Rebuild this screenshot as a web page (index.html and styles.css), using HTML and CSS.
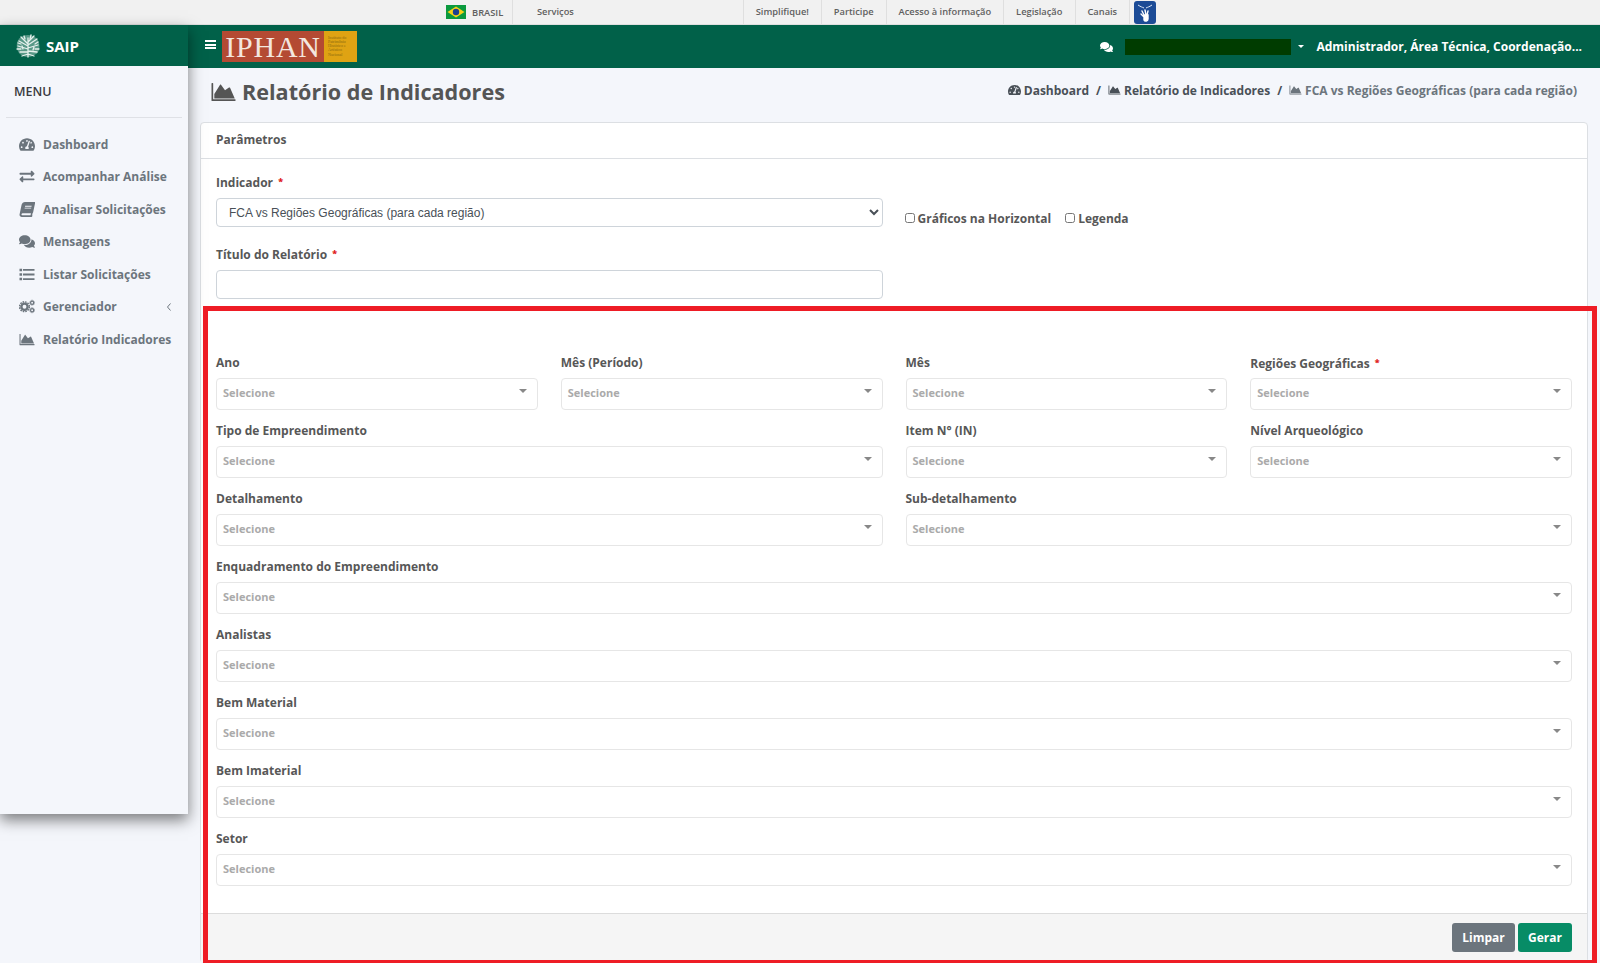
FILE: index.html
```html
<!DOCTYPE html>
<html lang="pt-BR">
<head>
    <meta charset="UTF-8">
    <title>SAIP - Relatório de Indicadores</title>
    <link rel="stylesheet" href="styles.css">
</head>
<body>
    <svg class="icon-defs" xmlns="http://www.w3.org/2000/svg">
        <symbol id="i-dash" viewBox="0 0 576 512"><path d="M288 32C128.94 32 0 160.94 0 320c0 52.8 14.25 102.26 39.06 144.8 5.61 9.62 16.3 15.2 27.44 15.2h443c11.14 0 21.83-5.58 27.44-15.2C561.75 422.26 576 372.8 576 320c0-159.06-128.94-288-288-288zm0 64c14.71 0 26.58 10.13 30.32 23.65-1.11 2.26-2.64 4.23-3.45 6.67l-9.22 27.67c-5.13 3.49-10.97 6.01-17.64 6.01-17.67 0-32-14.33-32-32S270.33 96 288 96zM96 384c-17.67 0-32-14.33-32-32s14.33-32 32-32 32 14.33 32 32-14.33 32-32 32zm48-160c-17.67 0-32-14.33-32-32s14.33-32 32-32 32 14.33 32 32-14.33 32-32 32zm246.77-72.41l-61.33 184C343.13 347.33 352 364.54 352 384c0 11.72-3.38 22.55-8.88 32H232.88c-5.5-9.45-8.88-20.28-8.88-32 0-33.94 26.5-61.43 59.9-63.59l61.34-184.01c4.17-12.56 17.73-19.45 30.36-15.17 12.57 4.19 19.35 17.79 15.17 30.36zm14.66 57.2l15.52-46.55c3.47-1.29 7.13-2.23 11.05-2.23 17.67 0 32 14.33 32 32s-14.33 32-32 32c-11.38 0-20.89-6.27-26.57-15.22zM480 384c-17.67 0-32-14.33-32-32s14.33-32 32-32 32 14.33 32 32-14.33 32-32 32z"/></symbol>
        <symbol id="i-exchange" viewBox="0 0 512 512"><path d="M0 168v-16c0-13.255 10.745-24 24-24h360V80c0-21.367 25.899-32.042 40.971-16.971l80 80c9.372 9.373 9.372 24.569 0 33.941l-80 80C409.956 271.982 384 261.456 384 240v-48H24c-13.255 0-24-10.745-24-24zm488 152H128v-48c0-21.314-25.862-32.08-40.971-16.971l-80 80c-9.372 9.373-9.372 24.569 0 33.941l80 80C102.057 463.997 128 453.437 128 432v-48h360c13.255 0 24-10.745 24-24v-16c0-13.255-10.745-24-24-24z"/></symbol>
        <symbol id="i-book" viewBox="0 0 512 512"><path transform="translate(92 0) skewX(-12)" d="M448 360V24c0-13.3-10.7-24-24-24H96C43 0 0 43 0 96v320c0 53 43 96 96 96h328c13.3 0 24-10.7 24-24v-16c0-7.5-3.5-14.3-8.9-18.7-4.2-15.4-4.2-59.3 0-74.7 5.4-4.3 8.9-11.1 8.9-18.6zM128 134c0-3.3 2.7-6 6-6h212c3.3 0 6 2.7 6 6v20c0 3.3-2.7 6-6 6H134c-3.3 0-6-2.7-6-6v-20zm0 64c0-3.3 2.7-6 6-6h212c3.3 0 6 2.7 6 6v20c0 3.3-2.7 6-6 6H134c-3.3 0-6-2.7-6-6v-20zm253.4 250H96c-17.7 0-32-14.3-32-32 0-17.6 14.4-32 32-32h285.4c-1.9 17.1-1.9 46.9 0 64z"/></symbol>
        <symbol id="i-comments" viewBox="0 0 576 512"><path d="M416 192c0-88.4-93.1-160-208-160S0 103.6 0 192c0 34.3 14.1 65.9 38 92-13.4 30.2-35.5 54.2-35.8 54.5-2.2 2.3-2.8 5.7-1.5 8.7S4.8 352 8 352c36.6 0 66.9-12.3 88.7-25 32.2 15.7 70.3 25 111.3 25 114.9 0 208-71.6 208-160zm122 220c23.9-26 38-57.7 38-92 0-66.9-53.5-124.2-129.3-148.1.9 6.6 1.3 13.3 1.3 20.1 0 105.9-107.7 192-240 192-10.8 0-21.3-.8-31.7-1.9C207.8 439.6 281.8 480 368 480c41 0 79.1-9.2 111.3-25 21.8 12.7 52.1 25 88.7 25 3.2 0 6.1-1.9 7.3-4.8 1.3-2.9.7-6.3-1.5-8.7-.3-.3-22.4-24.2-35.8-54.5z"/></symbol>
        <symbol id="i-list" viewBox="0 0 512 512"><path d="M0 56h88v88H0zM0 212h88v88H0zM0 368h88v88H0zM120 68h392v64H120zM120 224h392v64H120zM120 380h392v64H120z"/></symbol>
        <symbol id="i-cogs" viewBox="0 0 640 512">
            <circle cx="220" cy="265" r="125" fill="none" stroke="currentColor" stroke-width="95"/>
            <circle cx="220" cy="265" r="195" fill="none" stroke="currentColor" stroke-width="60" stroke-dasharray="64 38"/>
            <circle cx="525" cy="105" r="62" fill="none" stroke="currentColor" stroke-width="50"/>
            <circle cx="525" cy="105" r="100" fill="none" stroke="currentColor" stroke-width="32" stroke-dasharray="30 22"/>
            <circle cx="525" cy="405" r="62" fill="none" stroke="currentColor" stroke-width="50"/>
            <circle cx="525" cy="405" r="100" fill="none" stroke="currentColor" stroke-width="32" stroke-dasharray="30 22"/>
        </symbol>
        <symbol id="i-chart" viewBox="0 0 512 512"><path d="M500 412c6.600 0 12 3 12 8v20c0 5-5.400 8-12 8H12c-6.600 0-12-5.400-12-12V76c0-6.600 5.400-12 12-12h12c6.600 0 12 5.400 12 12v336zM372.700 159.500L288 216l-85.300-113.700c-5.100-6.800-15.500-6.300-19.900.9L60 300v92h436l-100.200-227.500c-3.300-6.500-17.100-9.200-23.100-5z"/></symbol>
    </svg>

    <div class="gov-bar">
        <div class="gov-brasil">
            <svg class="flag" viewBox="0 0 20 14"><rect width="20" height="14" fill="#0b9a3e"/><path d="M10 1.500L18.500 7 10 12.500 1.500 7z" fill="#f7d117"/><circle cx="10" cy="7" r="3.200" fill="#1d3f8f"/></svg>
            <span>BRASIL</span>
        </div>
        <div class="gov-servicos">Serviços</div>
        <a class="gov-link">Simplifique!</a>
        <a class="gov-link">Participe</a>
        <a class="gov-link">Acesso à informação</a>
        <a class="gov-link">Legislação</a>
        <a class="gov-link">Canais</a>
        <svg class="libras" viewBox="0 0 22 23">
            <rect width="22" height="23" rx="3" fill="#1c4b96"/>
            <path d="M4 4c3 2 4 2 6 3M18 4c-3 2-4 2-6 3" stroke="#dfe8f5" stroke-width="1" fill="none"/>
            <path d="M8 10l2 4M11 9l1 5M14 10l-1 4M7 13l3 3M10 14h4v4c0 2-3 3-4 1z" stroke="#fff" stroke-width="1.400" fill="#fff" stroke-linecap="round"/>
        </svg>
    </div>

    <div class="app">
        <aside class="sidebar">
            <div class="brand">
                <svg class="brand-logo" viewBox="0 0 24 24">
                    <path d="M12 1c5 0 10 3 11 8s0 9-3 11-5 3-8 3-6-1-8-3-4-6-3-11S7 1 12 1z" fill="#dcebe6" opacity="0.4"/>
                    <g stroke="#e6f1ed" stroke-width="1.300" fill="none" stroke-linecap="round">
                        <path d="M12 23V4M12 10L5 3M12 12L3 7M12 15L2 12M12 18L4 18M12 8l6-6M12 11l9-6M12 14l10-3M12 17l9 1M12 20l6 2M12 20l-6 2"/>
                        <path d="M8 2l1 3M15 1l-1 4M2 9l3 1M22 8l-3 2M1 15l4 0M23 15l-4 0M6 12l1 3M18 13l-1 3"/>
                    </g>
                </svg>
                <span>SAIP</span>
            </div>
            <div class="menu-title">MENU</div>
            <nav class="menu">
                <a class="menu-item"><svg class="menu-icon"><use href="#i-dash"/></svg>Dashboard</a>
                <a class="menu-item"><svg class="menu-icon"><use href="#i-exchange"/></svg>Acompanhar Análise</a>
                <a class="menu-item"><svg class="menu-icon"><use href="#i-book"/></svg>Analisar Solicitações</a>
                <a class="menu-item"><svg class="menu-icon"><use href="#i-comments"/></svg>Mensagens</a>
                <a class="menu-item"><svg class="menu-icon"><use href="#i-list"/></svg>Listar Solicitações</a>
                <a class="menu-item"><svg class="menu-icon"><use href="#i-cogs"/></svg>Gerenciador
                    <svg class="menu-arrow" viewBox="0 0 6 10"><path d="M4.500 1.500L1.500 5l3 3.500" fill="none" stroke="currentColor"/></svg>
                </a>
                <a class="menu-item"><svg class="menu-icon"><use href="#i-chart"/></svg>Relatório Indicadores</a>
            </nav>
        </aside>

        <div class="main">
            <header class="topbar">
                <div class="burger"><i></i><i></i><i></i></div>
                <div class="logo">
                    <div class="logo-name">IPHAN</div>
                    <div class="logo-sub">Instituto do Patrimônio Histórico e Artístico Nacional</div>
                </div>
                <svg class="top-chat"><use href="#i-comments"/></svg>
                <div class="user-mask"></div>
                <span class="user-caret"></span>
                <div class="user-role">Administrador, Área Técnica, Coordenação...</div>
            </header>

            <div class="page-head">
                <h1 class="page-title"><svg class="title-icon"><use href="#i-chart"/></svg>Relatório de Indicadores</h1>
                <div class="crumbs">
                    <a class="crumb"><svg class="crumb-icon"><use href="#i-dash"/></svg>Dashboard</a>
                    <span class="crumb-sep">/</span>
                    <a class="crumb"><svg class="crumb-icon"><use href="#i-chart"/></svg>Relatório de Indicadores</a>
                    <span class="crumb-sep">/</span>
                    <span class="crumb crumb-active"><svg class="crumb-icon"><use href="#i-chart"/></svg>FCA vs Regiões Geográficas (para cada região)</span>
                </div>
            </div>

            <section class="card">
                <div class="card-header">Parâmetros</div>
                <div class="card-body">
                    <div class="form-grid form-top">
                        <div class="field span-2">
                            <label class="field-label">Indicador <b class="req">*</b></label>
                            <select class="form-select">
                                <option>FCA vs Regiões Geográficas (para cada região)</option>
                            </select>
                        </div>
                        <div class="checks span-2">
                            <label class="check"><input type="checkbox">Gráficos na Horizontal</label>
                            <label class="check"><input type="checkbox">Legenda</label>
                        </div>
                        <div class="field span-2">
                            <label class="field-label">Título do Relatório <b class="req">*</b></label>
                            <input class="form-input" type="text">
                        </div>
                    </div>

                    <div class="form-grid form-filters">
                        <div class="field">
                            <label class="field-label">Ano</label>
                            <div class="select-box">Selecione</div>
                        </div>
                        <div class="field">
                            <label class="field-label">Mês (Período)</label>
                            <div class="select-box">Selecione</div>
                        </div>
                        <div class="field">
                            <label class="field-label">Mês</label>
                            <div class="select-box">Selecione</div>
                        </div>
                        <div class="field">
                            <label class="field-label">Regiões Geográficas <b class="req">*</b></label>
                            <div class="select-box">Selecione</div>
                        </div>
                        <div class="field span-2">
                            <label class="field-label">Tipo de Empreendimento</label>
                            <div class="select-box">Selecione</div>
                        </div>
                        <div class="field">
                            <label class="field-label">Item N° (IN)</label>
                            <div class="select-box">Selecione</div>
                        </div>
                        <div class="field">
                            <label class="field-label">Nível Arqueológico</label>
                            <div class="select-box">Selecione</div>
                        </div>
                        <div class="field span-2">
                            <label class="field-label">Detalhamento</label>
                            <div class="select-box">Selecione</div>
                        </div>
                        <div class="field span-2">
                            <label class="field-label">Sub-detalhamento</label>
                            <div class="select-box">Selecione</div>
                        </div>
                        <div class="field span-4">
                            <label class="field-label">Enquadramento do Empreendimento</label>
                            <div class="select-box">Selecione</div>
                        </div>
                        <div class="field span-4">
                            <label class="field-label">Analistas</label>
                            <div class="select-box">Selecione</div>
                        </div>
                        <div class="field span-4">
                            <label class="field-label">Bem Material</label>
                            <div class="select-box">Selecione</div>
                        </div>
                        <div class="field span-4">
                            <label class="field-label">Bem Imaterial</label>
                            <div class="select-box">Selecione</div>
                        </div>
                        <div class="field span-4">
                            <label class="field-label">Setor</label>
                            <div class="select-box">Selecione</div>
                        </div>
                    </div>
                </div>
                <div class="card-footer">
                    <button class="btn btn-gray">Limpar</button>
                    <button class="btn btn-green">Gerar</button>
                </div>
            </section>
        </div>
    </div>

    <!-- marcacao vermelha sobre o formulario -->
    <div class="red-frame"></div>
</body>
</html>
```

FILE: styles.css
```css
*{
    box-sizing: border-box;
}
html,body{
    height: 963px;
    overflow: hidden;
}
body{
    margin: 0;
    background-color: #f4f6fb;
    font-family: "Open Sans", sans-serif;
    font-size: 12px;
    color: #575757;
}
.icon-defs{
    display: none;
}

/* barra do governo */
.gov-bar{
    height: 25px;
    padding-left: 446px;
    display: flex;
    align-items: center;
    background-color: #f1f1f1;
    border-bottom: 1px solid #dfdfdf;
    font-size: 9.3px;
    font-weight: 600;
    color: #606060;
}
.gov-brasil{
    width: 67px;
    height: 24px;
    display: flex;
    align-items: center;
    gap: 6px;
    border-right: 1px solid #dfdfdf;
}
.flag{
    width: 20px;
    height: 14px;
}
.gov-servicos{
    width: 231px;
    height: 24px;
    line-height: 24px;
    padding-left: 24px;
    border-right: 1px solid #dfdfdf;
}
.gov-link{
    height: 24px;
    line-height: 24px;
    padding: 0 12.3px 0 11.7px;
    border-right: 1px solid #dfdfdf;
}
.libras{
    width: 22px;
    height: 23px;
    margin-left: 4px;
}

/* estrutura */
.app{
    display: flex;
    height: 938px;
}
.sidebar{
    width: 188px;
    height: 789px;
    flex-shrink: 0;
    position: relative;
    z-index: 5;
    background-color: #f4f6fb;
    box-shadow: 0 6px 14px rgba(0, 0, 0, 0.5);
}
.brand{
    height: 41px;
    padding-left: 16px;
    display: flex;
    align-items: center;
    gap: 6px;
    background-color: #016149;
    color: #ffffff;
    font-size: 15px;
    font-weight: 700;
}
.brand-logo{
    width: 24px;
    height: 24px;
}
.menu-title{
    margin: 0 6px;
    padding: 17px 8px 0 8px;
    height: 52px;
    border-bottom: 1px solid #dfe1e6;
    font-size: 12.5px;
    font-weight: 600;
    color: #3a3a3f;
}
.menu{
    padding-top: 10px;
}
.menu-item{
    height: 32.5px;
    padding-left: 20px;
    display: flex;
    align-items: center;
    font-weight: 700;
    color: #6c757d;
    position: relative;
}
.menu-icon{
    width: 16px;
    height: 15px;
    margin-left: -1px;
    margin-right: 8px;
    fill: currentColor;
}
.menu-arrow{
    width: 6px;
    height: 10px;
    margin-left: auto;
    margin-right: 16px;
}

.main{
    flex: 1;
    min-width: 0;
}
.topbar{
    height: 43px;
    padding-left: 17px;
    padding-right: 18px;
    display: flex;
    align-items: center;
    background-color: #016149;
}
.burger{
    width: 11px;
    margin-right: 6px;
    margin-top: -2px;
}
.burger i{
    display: block;
    height: 2px;
    margin-bottom: 1.500px;
    background-color: #ffffff;
}
.logo{
    width: 135px;
    height: 31px;
    margin-top: -1px;
    display: flex;
    background-color: #dfa313;
}
.logo-name{
    width: 102px;
    background-color: #b44a33;
    color: #f3e6df;
    font-family: "Liberation Serif", serif;
    font-size: 30px;
    line-height: 31px;
    letter-spacing: 0.8px;
    text-align: center;
}
.logo-sub{
    flex: 1;
    padding: 5px 2px 0 4px;
    font-family: "Liberation Serif", serif;
    font-size: 4px;
    line-height: 4.300px;
    color: #8a6a10;
}
.top-chat{
    width: 13px;
    height: 12px;
    margin-left: auto;
    margin-right: 12px;
    fill: #ffffff;
}
.user-mask{
    width: 166px;
    height: 16px;
    background-color: #003c00;
}
.user-caret{
    width: 0;
    height: 0;
    margin: 0 12px 0 7px;
    border: 3.500px solid transparent;
    border-top-color: #ffffff;
    border-bottom-width: 0;
}
.user-role{
    font-size: 12px;
    font-weight: 700;
    color: #ffffff;
}

.page-head{
    height: 54px;
    margin: 0 23px 0 23px;
    display: flex;
    align-items: center;
    justify-content: space-between;
}
.page-title{
    margin: -7px 0 0;
    display: flex;
    align-items: center;
    font-size: 21.6px;
    font-weight: 700;
    color: #555555;
}
.title-icon{
    width: 25px;
    height: 24px;
    margin-right: 6px;
    fill: currentColor;
}
.crumbs{
    display: flex;
    align-items: center;
    margin-top: -10px;
    font-weight: 700;
    color: #495057;
}
.crumb{
    display: flex;
    align-items: center;
}
.crumb-active{
    color: #6c757d;
}
.crumb-icon{
    width: 13px;
    height: 12px;
    margin-right: 3px;
    fill: currentColor;
}
.crumb-sep{
    margin: 0 7px;
}

/* card */
.card{
    height: 841px;
    margin: 0 12px 0 12px;
    display: flex;
    flex-direction: column;
    background-color: #ffffff;
    border: 1px solid #dcdfe3;
    border-radius: 4px;
}
.card-header{
    height: 36px;
    line-height: 34px;
    padding-left: 15px;
    border-bottom: 1px solid #dcdfe3;
    font-weight: 700;
}
.card-body{
    flex: 1;
    padding: 14px 15px 0;
}
.card-footer{
    height: 49px;
    padding: 9px 15px 0 0;
    display: flex;
    justify-content: flex-end;
    gap: 3px;
    background-color: #f5f5f5;
    border-top: 1px solid #dcdcdc;
}

/* formulario */
.form-grid{
    display: grid;
    grid-template-columns: repeat(4, 1fr);
    column-gap: 23px;
}
.form-top{
    row-gap: 18px;
}
.form-top .field-label{
    line-height: 18px;
}
.form-filters{
    margin-top: 54px;
    row-gap: 11px;
}
.span-2{
    grid-column: span 2;
}
.span-4{
    grid-column: span 4;
}
.field-label{
    display: block;
    height: 20px;
    line-height: 20px;
    margin-bottom: 5px;
    font-weight: 700;
}
.req{
    margin-left: 2px;
    color: #e01c1c;
    font-size: 9px;
    vertical-align: 2px;
}
.form-select,.form-input{
    display: block;
    width: 100%;
    height: 29px;
    background-color: #ffffff;
    border: 1px solid #ced4da;
    border-radius: 4px;
}
.form-select{
    padding-left: 8px;
    font-family: "Liberation Sans", Arial, sans-serif;
    font-size: 12px;
    color: #495057;
}
.checks{
    align-self: end;
    display: flex;
    gap: 14px;
    margin-left: -1px;
    margin-bottom: -1px;
}
.check{
    display: flex;
    align-items: center;
    height: 20px;
    font-weight: 700;
}
.check input{
    width: 10px;
    height: 10px;
    margin: 0 3px 0 0;
}
.select-box{
    height: 32px;
    line-height: 28px;
    padding-left: 6px;
    position: relative;
    border: 1px solid #e6e6e6;
    border-radius: 4px;
    font-size: 11px;
    font-weight: 700;
    color: #aaaaaa;
}
.select-box::after{
    content: '';
    position: absolute;
    top: 10px;
    right: 10px;
    width: 0;
    height: 0;
    border: 4px solid transparent;
    border-top-color: #888888;
    border-bottom-width: 0;
}
.btn{
    height: 29px;
    padding: 0;
    border: 0;
    border-radius: 3px;
    font-family: "Open Sans", sans-serif;
    font-size: 12px;
    font-weight: 700;
    color: #ffffff;
}
.btn-gray{
    width: 63px;
    background-color: #6c757d;
}
.btn-green{
    width: 54px;
    background-color: #078c66;
}

.red-frame{
    position: absolute;
    top: 306px;
    left: 203px;
    width: 1394px;
    height: 657px;
    border: 5px solid #ee1c25;
    border-bottom-width: 3px;
    pointer-events: none;
    z-index: 10;
}
```
